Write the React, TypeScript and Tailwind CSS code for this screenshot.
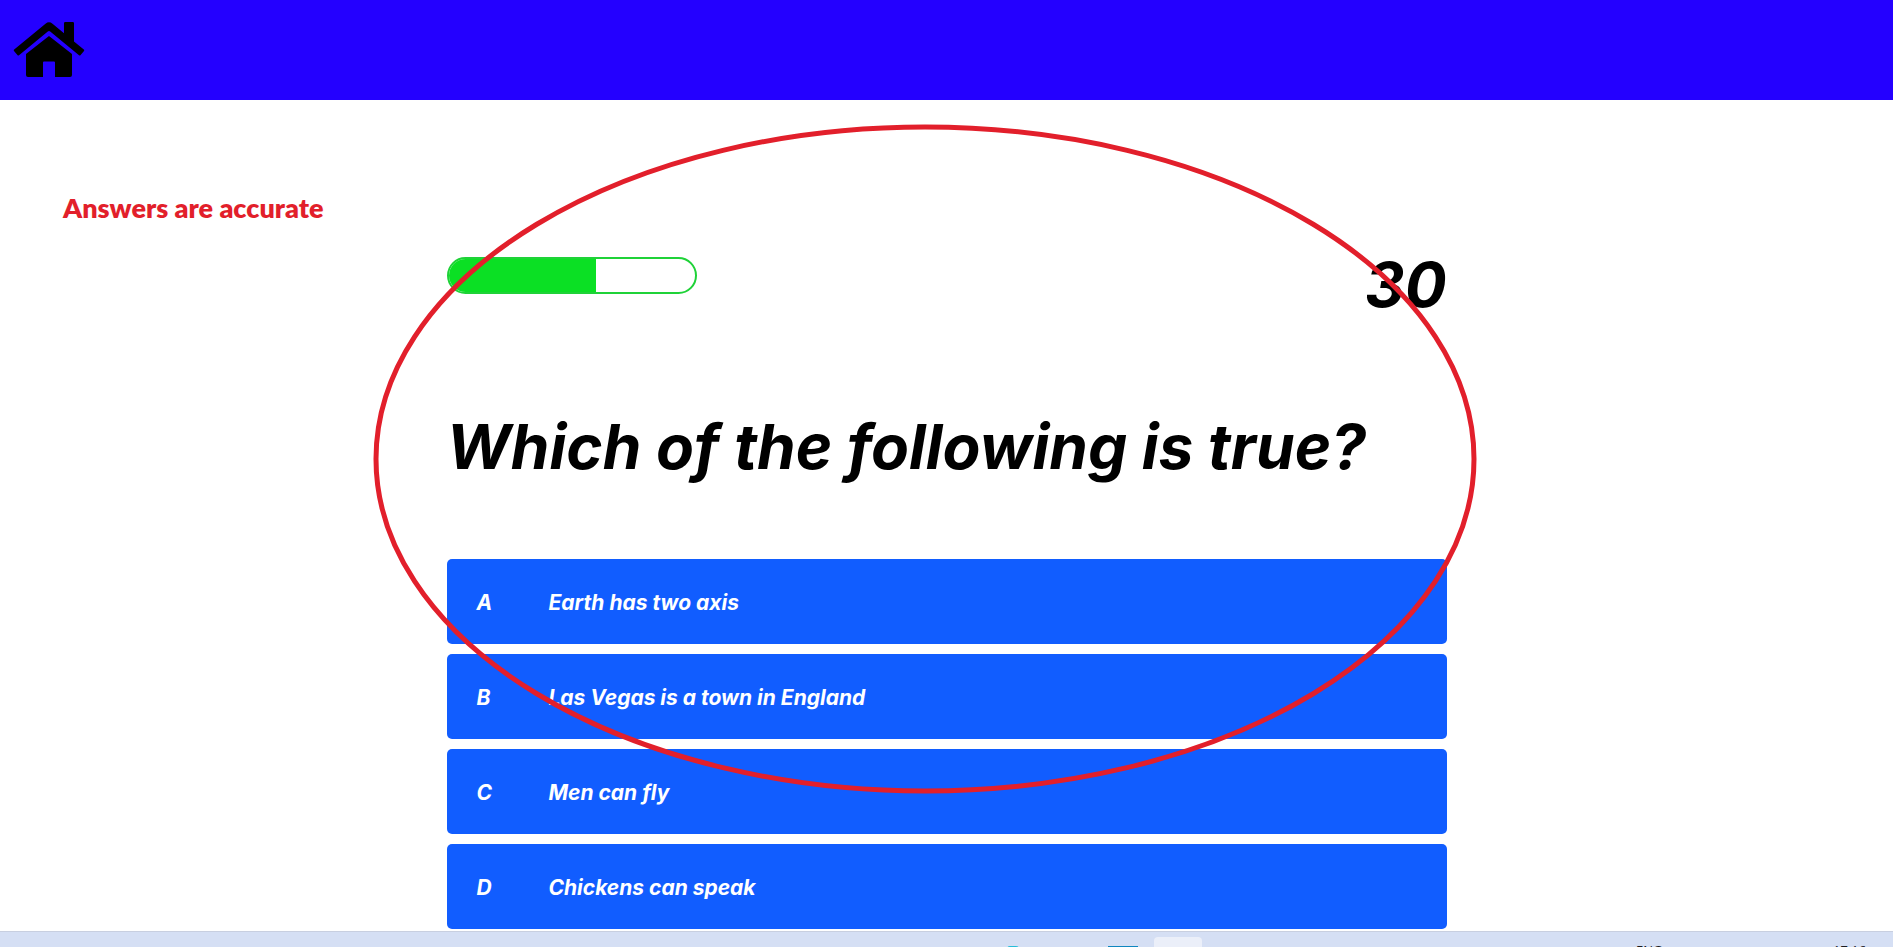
const choices = [
  { prefix: "A", text: "Earth has two axis" },
  { prefix: "B", text: "Las Vegas is a town in England" },
  { prefix: "C", text: "Men can fly" },
  { prefix: "D", text: "Chickens can speak" },
];

const progress = 60;
const score = 30;

function HomeIcon() {
  return (
    <svg viewBox="0 0 72 56" className="h-14 w-[72px]" aria-hidden="true">
      <path
        d="M13 32 36 14l23 18V53a2 2 0 0 1-2 2H42V40.500a1 1 0 0 0-1-1H31a1 1 0 0 0-1 1V55H15a2 2 0 0 1-2-2Z"
        fill="#000"
      />
      <path
        d="M1.200 27.500 32.500 1.800a5.500 5.500 0 0 1 7 0L51 11.300V1.200A1.200 1.200 0 0 1 52.200 0h7.600A1.200 1.200 0 0 1 61 1.200v18.200l9.800 8.100a1 1 0 0 1 .2 1.400l-3.600 4.300a1 1 0 0 1-1.400.1L37.200 9.400a2 2 0 0 0-2.400 0L6 33.300a1 1 0 0 1-1.400-.1L1 28.900a1 1 0 0 1 .2-1.400Z"
        fill="#000"
      />
    </svg>
  );
}

function Header() {
  return (
    <header className="flex h-[100px] shrink-0 items-center bg-[#2400ff] px-[13px]">
      <a href="#home" aria-label="Home">
        <HomeIcon />
      </a>
    </header>
  );
}

function Hud() {
  return (
    <div className="flex items-start justify-between">
      <div
        role="progressbar"
        aria-label="Quiz progress"
        aria-valuenow={progress}
        className="h-[37px] w-[250px] overflow-hidden rounded-full border-2 border-[#1fd238]"
      >
        <div className="h-full bg-[#0be024]" style={{ width: `${progress}%` }} />
      </div>
      <p className="text-[62px] leading-[56px] font-bold">{score}</p>
    </div>
  );
}

function Choice({ prefix, text }: { prefix: string; text: string }) {
  return (
    <button
      type="button"
      className="flex h-[85px] w-full items-center rounded-[5px] bg-[#115dff] px-[30px] pt-[2px] text-left text-[21px] font-bold text-white"
    >
      <span className="w-[72px]">{prefix}</span>
      <span>{text}</span>
    </button>
  );
}

function Taskbar() {
  return (
    <footer className="flex h-4 shrink-0 items-start justify-end overflow-hidden border-t border-[#c8cfe0] bg-[#d5dff4] font-['Open_Sans',sans-serif] text-[13px] leading-4 text-[#1b1b1f]">
      <span className="mt-[14px] mr-[89px] h-4 w-3 rounded-t-[3px] bg-[#27bcd8]" />
      <span className="mt-[14px] mr-4 h-4 w-[30px] bg-[#0f86bf]" />
      <span className="mt-[5px] mr-[434px] h-12 w-12 rounded-[4px] bg-[#ebeff9]" />
      <span className="mt-[10px] w-[197px]">ENG</span>
      <span className="mt-[10px] w-[60px]">17:16</span>
    </footer>
  );
}

export default function App() {
  return (
    <div className="flex h-screen flex-col overflow-hidden bg-white font-['Inter',sans-serif] text-black">
      <Header />
      <main className="relative min-h-0 flex-1 overflow-hidden">
        <p className="absolute top-[91px] left-[63px] font-['Lato',sans-serif] text-[27px] leading-[34px] font-extrabold text-[#e21f2b]">
          Answers are accurate
        </p>
        <section className="relative mx-auto w-full max-w-[1000px] pt-[157px] italic">
          <Hud />
          <h1 className="mt-[94px] text-[62px] leading-[80px] font-bold whitespace-nowrap">
            Which of the following is true?
          </h1>
          <div className="mt-[72px] flex flex-col gap-[10px]">
            {choices.map((choice) => (
              <Choice key={choice.prefix} {...choice} />
            ))}
          </div>
          <svg
            viewBox="0 0 1104 670"
            className="pointer-events-none absolute top-[24px] -left-[74px] h-[670px] w-[1104px] max-w-none"
            aria-hidden="true"
          >
            <ellipse cx="552" cy="335" rx="549" ry="332" fill="none" stroke="#e21f2b" strokeWidth="5" />
          </svg>
        </section>
      </main>
      <Taskbar />
    </div>
  );
}
